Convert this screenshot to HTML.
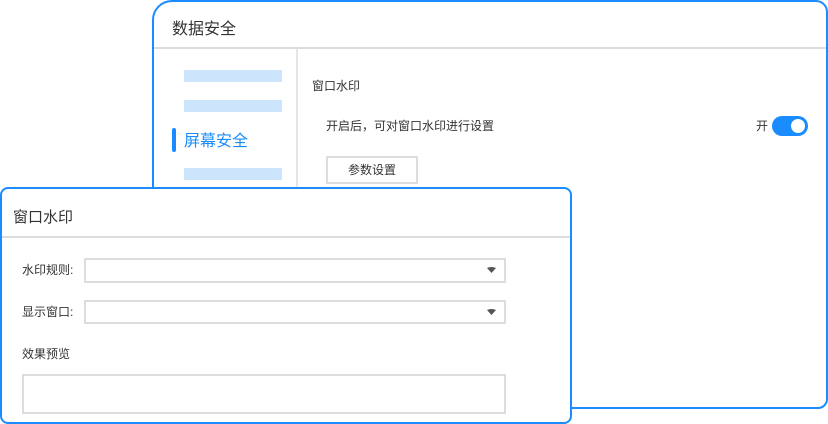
<!DOCTYPE html><html><head><meta charset="utf-8"><style>
*{margin:0;padding:0;box-sizing:border-box}
body{width:828px;height:424px;background:#fff;position:relative;overflow:hidden;font-family:"Liberation Sans","Noto Sans CJK SC",sans-serif;color:#333}
.a{position:absolute}
</style></head><body>
<div class="a" style="left:152px;top:0;width:676px;height:409px;border:2px solid #1a8cff;border-radius:20px 12px 10px 0;background:#fff"></div>
<div class="a" style="left:172px;top:15px;font-size:16px;color:#333">数据安全</div>
<div class="a" style="left:154px;top:47px;width:672px;height:2px;background:#ddd"></div>
<div class="a" style="left:296px;top:49px;width:2px;height:140px;background:#e6e6e6"></div>
<div class="a" style="left:184px;top:70px;width:98px;height:12px;background:#cce5fc"></div>
<div class="a" style="left:184px;top:100px;width:98px;height:12px;background:#cce5fc"></div>
<div class="a" style="left:184px;top:168px;width:98px;height:12px;background:#cce5fc"></div>
<div class="a" style="left:172px;top:128px;width:4px;height:24px;border-radius:2px;background:#1a8cff"></div>
<div class="a" style="left:184px;top:127px;font-size:16px;color:#1a8cff">屏幕安全</div>
<div class="a" style="left:312px;top:77px;font-size:12px">窗口水印</div>
<div class="a" style="left:326px;top:117px;font-size:12px">开启后，可对窗口水印进行设置</div>
<div class="a" style="left:756px;top:117px;font-size:12px">开</div>
<div class="a" style="left:772px;top:116px;width:36px;height:20px;border-radius:10px;background:#1a8cff"><div class="a" style="left:19px;top:3px;width:14px;height:14px;border-radius:50%;background:#fff"></div></div>
<div class="a" style="left:326px;top:156px;width:92px;height:28px;border:2px solid #ddd;font-size:12px;text-align:center;line-height:24px">参数设置</div>
<div class="a" style="left:0;top:187px;width:572px;height:237px;border:2px solid #1a8cff;border-radius:8px;background:#fff"></div>
<div class="a" style="left:13px;top:206px;font-size:15px">窗口水印</div>
<div class="a" style="left:2px;top:236px;width:568px;height:2px;background:#ddd"></div>
<div class="a" style="left:22px;top:261px;font-size:12px">水印规则:</div>
<div class="a" style="left:84px;top:258px;width:422px;height:25px;border:2px solid #ddd"></div>
<div class="a" style="left:22px;top:303px;font-size:12px">显示窗口:</div>
<div class="a" style="left:84px;top:300px;width:422px;height:24px;border:2px solid #ddd"></div>
<svg class="a" style="left:486px;top:266px" width="11" height="8"><path d="M1 2Q5.5 0 10 2L5.5 7Z" fill="#555"/></svg>
<svg class="a" style="left:486px;top:308px" width="11" height="8"><path d="M1 2Q5.5 0 10 2L5.5 7Z" fill="#555"/></svg>
<div class="a" style="left:22px;top:345px;font-size:12px">效果预览</div>
<div class="a" style="left:22px;top:374px;width:484px;height:40px;border:2px solid #ddd"></div>
</body></html>
